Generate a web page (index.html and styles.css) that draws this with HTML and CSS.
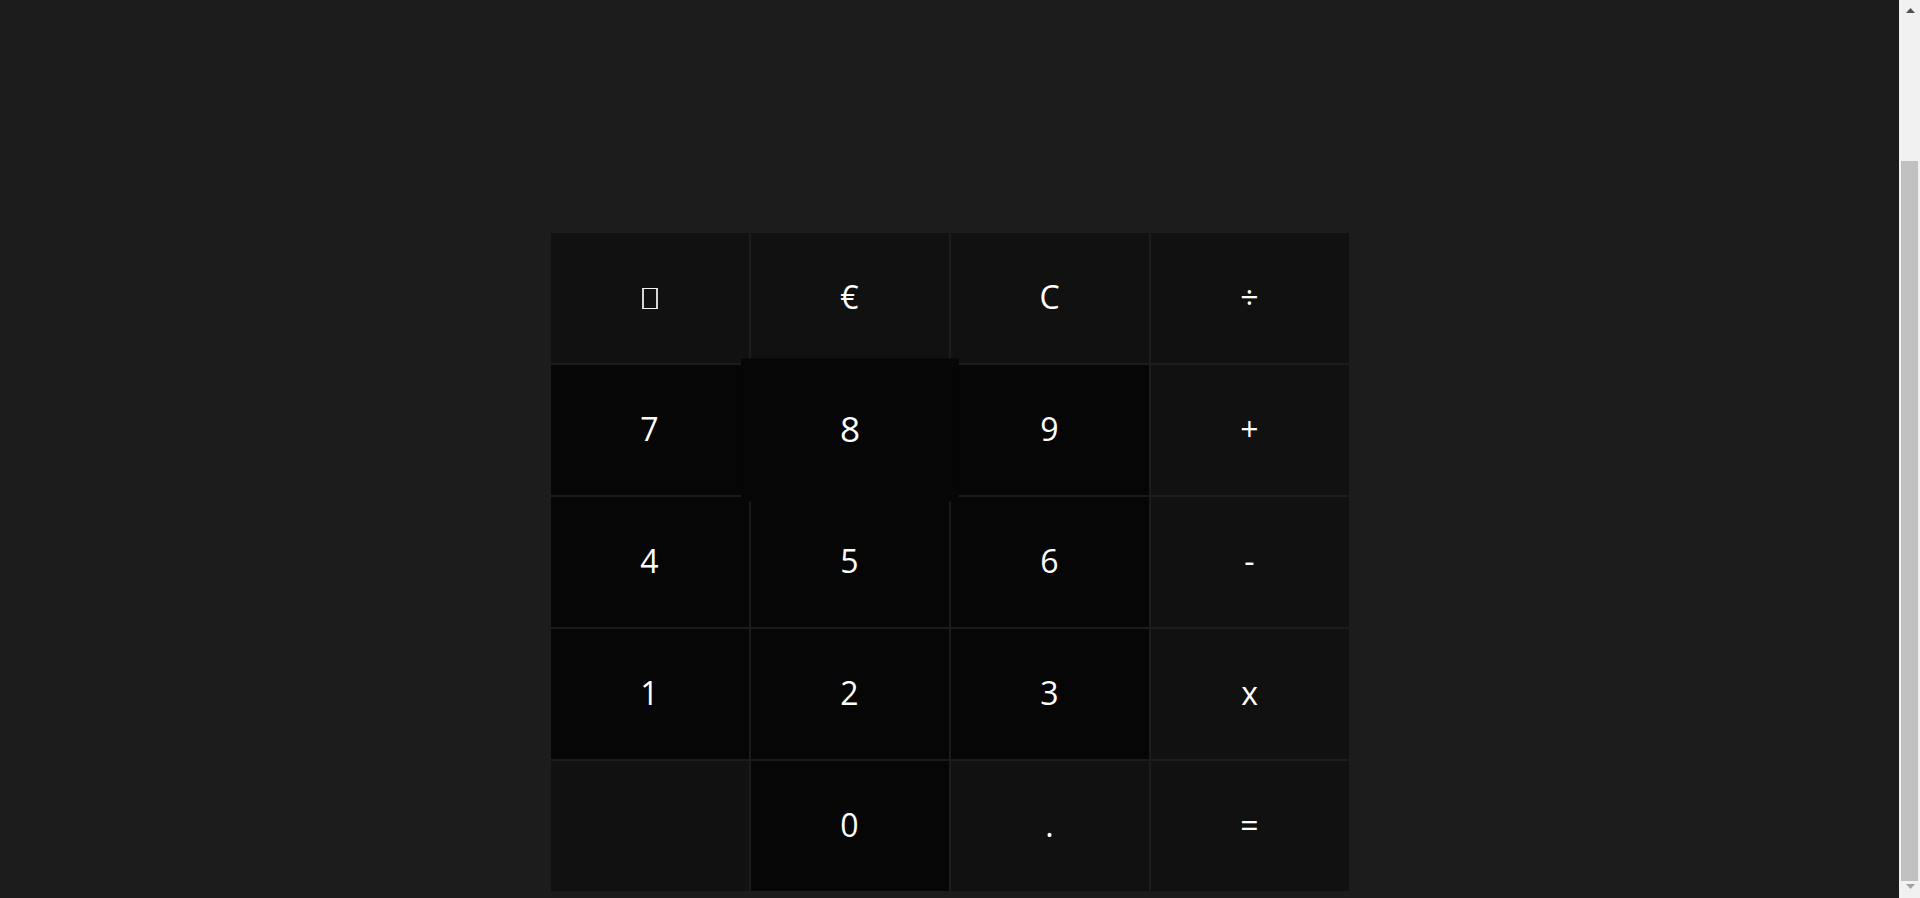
FILE: index.html
```html
<!DOCTYPE html>
<html lang="en">
<head>
<meta charset="utf-8">
<title>Calculator</title>
<link rel="stylesheet" href="styles.css">
</head>
<body>
<main class="calculator">
  <section class="display" aria-label="display"></section>
  <section class="keypad">
    <button class="key key--fn" aria-label="backspace"><span class="tofu"></span></button>
    <button class="key key--fn">€</button>
    <button class="key key--fn">C</button>
    <button class="key key--fn">÷</button>
    <button class="key key--num">7</button>
    <button class="key key--num key--hover">8</button>
    <button class="key key--num">9</button>
    <button class="key key--fn">+</button>
    <button class="key key--num">4</button>
    <button class="key key--num">5</button>
    <button class="key key--num">6</button>
    <button class="key key--fn">-</button>
    <button class="key key--num">1</button>
    <button class="key key--num">2</button>
    <button class="key key--num">3</button>
    <button class="key key--fn">x</button>
    <button class="key key--fn"></button>
    <button class="key key--num">0</button>
    <button class="key key--fn">.</button>
    <button class="key key--fn">=</button>
  </section>
</main>
<aside class="scrollbar" aria-hidden="true">
  <div class="scrollbar__btn">
    <svg width="9" height="5" viewBox="0 0 9 5"><path d="M4.5 0 L9 5 L0 5 Z" fill="#505050"/></svg>
  </div>
  <div class="scrollbar__track">
    <div class="scrollbar__thumb"></div>
  </div>
  <div class="scrollbar__btn scrollbar__btn--down">
    <svg width="9" height="5" viewBox="0 0 9 5"><path d="M0 0 L9 0 L4.5 5 Z" fill="#a3a3a3"/></svg>
  </div>
</aside>
<script src="script.js"></script>
</body>
</html>
```
FILE: styles.css
```css
html {
  background: #1c1c1c;
}
body {
  margin: 8px 29px 7px 8px;
  background: #1c1c1c;
  font-family: "Open Sans", "Noto Sans", sans-serif;
}
.calculator {
  display: flex;
  flex-direction: column;
  align-items: center;
}
.display {
  height: 408px;
  width: 798px;
}
.keypad {
  display: grid;
  grid-template-columns: repeat(4, 198px);
  grid-auto-rows: 130px;
  gap: 2px;
}
.key {
  border: 0;
  margin: 0;
  padding: 0 0 3px 0;
  color: #ffffff;
  font-family: "Open Sans", "Noto Sans", sans-serif;
  font-size: 32px;
  display: flex;
  align-items: center;
  justify-content: center;
  cursor: pointer;
}
.key--fn {
  background: #111111;
}
.key--num {
  background: #060606;
}
.key--hover {
  transform: scale(1.1);
  position: relative;
  z-index: 1;
}
.tofu {
  display: block;
  width: 12px;
  height: 19px;
  border-top: 1px solid #f4f4f4;
  border-bottom: 1px solid #f4f4f4;
  border-left: 2px solid #d6d6d6;
  border-right: 2px solid #d6d6d6;
  margin-top: 4px;
}
.scrollbar {
  position: fixed;
  top: 0;
  right: 0;
  width: 21px;
  height: 100vh;
  background: #f1f1f1;
  display: flex;
  flex-direction: column;
  z-index: 10;
}
.scrollbar__btn {
  height: 17px;
  display: flex;
  justify-content: center;
  padding-top: 8px;
  box-sizing: border-box;
  padding-left: 1px;
}
.scrollbar__btn--down {
  padding-top: 3px;
  height: 17px;
}
.scrollbar__track {
  flex: 1;
  padding: 144px 2px 0 2px;
  display: flex;
  flex-direction: column;
}
.scrollbar__thumb {
  height: 720px;
  background: #c1c1c1;
}
```
FILE: script.js
```js
window.scrollTo(0, document.documentElement.scrollHeight);
```
